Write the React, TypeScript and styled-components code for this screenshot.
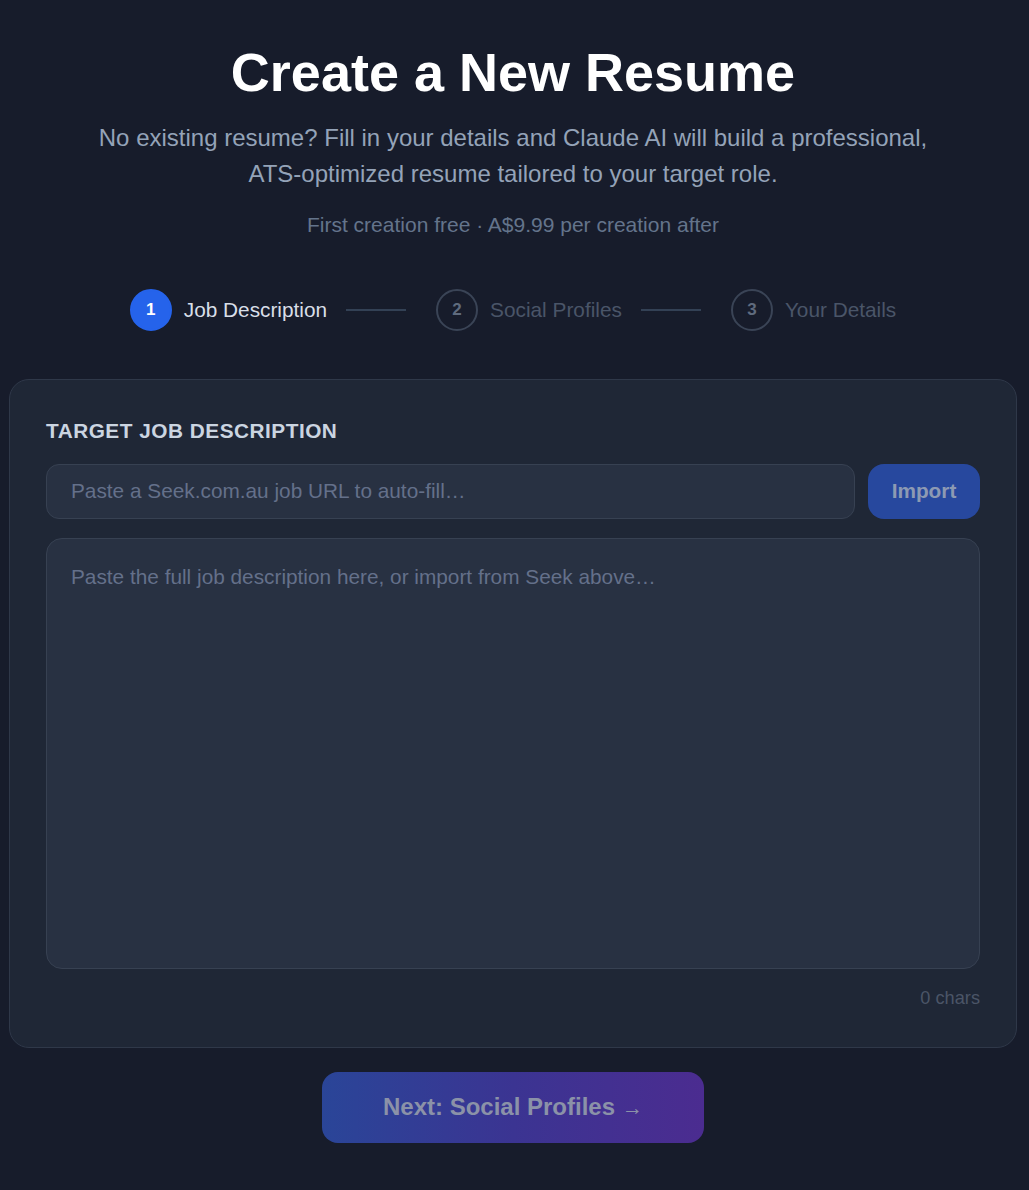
import React from "react";
import styled, { createGlobalStyle } from "styled-components";

const GlobalStyle = createGlobalStyle`
  html, body {
    margin: 0;
    padding: 0;
    background: #171c2b;
  }
  body {
    font-family: "Liberation Sans", Arial, sans-serif;
    color: #e2e8f0;
  }
  * { box-sizing: border-box; }
`;

const Page = styled.main`
  min-height: 1190px;
  padding: 40px 12px 40px 9px;
  display: flex;
  flex-direction: column;
  align-items: center;
`;

const Title = styled.h1`
  margin: 0;
  font-size: 54px;
  line-height: 1.2;
  font-weight: 700;
  color: #ffffff;
  text-align: center;
`;

const Subtitle = styled.p`
  margin: 15px 0 0;
  font-size: 24px;
  line-height: 36px;
  color: #94a3b8;
  text-align: center;
  max-width: 880px;
`;

const Pricing = styled.p`
  margin: 17px 0 0;
  font-size: 21px;
  line-height: 31px;
  color: #64748b;
  text-align: center;
`;

const Stepper = styled.div`
  display: flex;
  align-items: center;
  margin-top: 49px;
`;

const Step = styled.div`
  display: flex;
  align-items: center;
  gap: 12px;
`;

const StepDot = styled.span<{ $active?: boolean }>`
  width: 42px;
  height: 42px;
  border-radius: 50%;
  display: flex;
  align-items: center;
  justify-content: center;
  font-size: 17px;
  font-weight: 700;
  background: ${(p) => (p.$active ? "#2563eb" : "transparent")};
  border: 2px solid ${(p) => (p.$active ? "#2563eb" : "#3a4456")};
  color: ${(p) => (p.$active ? "#ffffff" : "#5f6b7e")};
`;

const StepLabel = styled.span<{ $active?: boolean }>`
  font-size: 20.8px;
  color: ${(p) => (p.$active ? "#d9dfe8" : "#4a5568")};
`;

const StepLine = styled.span`
  width: 60px;
  height: 2px;
  background: #334155;
  margin: 0 30px 0 19px;
`;

const Card = styled.section`
  width: 100%;
  max-width: 1008px;
  margin-top: 48px;
  background: #1f2736;
  border: 1px solid #2f3849;
  border-radius: 20px;
  padding: 38px 36px 38px;
  display: flex;
  flex-direction: column;
`;

const SectionLabel = styled.h2`
  margin: 0;
  font-size: 20.8px;
  line-height: 25px;
  font-weight: 700;
  letter-spacing: 0.5px;
  text-transform: uppercase;
  color: #cbd5e1;
`;

const UrlRow = styled.div`
  display: flex;
  gap: 13px;
  margin-top: 21px;
`;

const UrlInput = styled.input`
  flex: 1;
  height: 55px;
  padding: 0 24px;
  border-radius: 13px;
  border: 1px solid #374152;
  background: #283142;
  color: #e2e8f0;
  font-family: inherit;
  font-size: 20.8px;
  outline: none;
  &::placeholder { color: #64708a; }
`;

const ImportButton = styled.button`
  width: 112px;
  height: 55px;
  border: none;
  border-radius: 16px;
  background: #27489e;
  color: #8d9ab3;
  font-family: inherit;
  font-size: 20.8px;
  font-weight: 700;
  cursor: not-allowed;
`;

const JobText = styled.textarea`
  margin-top: 19px;
  height: 431px;
  resize: none;
  padding: 24px 24px;
  border-radius: 16px;
  border: 1px solid #374152;
  background: #283142;
  color: #e2e8f0;
  font-family: inherit;
  font-size: 20.8px;
  line-height: 28px;
  outline: none;
  &::placeholder { color: #64708a; }
`;

const CharCount = styled.div`
  margin-top: 19px;
  text-align: right;
  font-size: 18.2px;
  line-height: 21px;
  color: #4b5567;
`;

const NextButton = styled.button`
  margin-top: 24px;
  width: 382px;
  height: 71px;
  border: none;
  border-radius: 16px;
  background: linear-gradient(90deg, #2a4598 0%, #3b3492 50%, #4b2c90 100%);
  color: #8b92a8;
  font-family: inherit;
  font-size: 24px;
  font-weight: 700;
  cursor: not-allowed;
`;

const Arrow = styled.span`
  font-weight: 400;
  font-size: 21px;
  margin-left: 7px;
`;

const steps = ["Job Description", "Social Profiles", "Your Details"];

export default function App() {
  return (
    <>
      <GlobalStyle />
      <Page>
        <Title>Create a New Resume</Title>
        <Subtitle>
          No existing resume? Fill in your details and Claude AI will build a professional,
          ATS-optimized resume tailored to your target role.
        </Subtitle>
        <Pricing>First creation free · A$9.99 per creation after</Pricing>

        <Stepper>
          {steps.map((s, i) => (
            <React.Fragment key={s}>
              <Step>
                <StepDot $active={i === 0}>{i + 1}</StepDot>
                <StepLabel $active={i === 0}>{s}</StepLabel>
              </Step>
              {i < steps.length - 1 && <StepLine />}
            </React.Fragment>
          ))}
        </Stepper>

        <Card>
          <SectionLabel>Target Job Description</SectionLabel>
          <UrlRow>
            <UrlInput placeholder="Paste a Seek.com.au job URL to auto-fill…" />
            <ImportButton disabled>Import</ImportButton>
          </UrlRow>
          <JobText placeholder="Paste the full job description here, or import from Seek above…" />
          <CharCount>0 chars</CharCount>
        </Card>

        <NextButton disabled>
          Next: Social Profiles<Arrow>→</Arrow>
        </NextButton>
      </Page>
    </>
  );
}
